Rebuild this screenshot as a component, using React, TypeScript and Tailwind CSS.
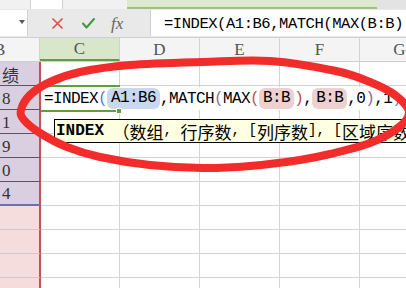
import React from "react";

// hand-drawn red loop, points traced from the screenshot
const LOOP: [number, number][] = [
  [21, 110], [30, 95], [50, 82], [80, 72], [130, 65], [203, 62], [270, 61],
  [336, 71], [370, 82], [395, 95], [409, 112], [398, 128], [370, 143],
  [330, 154], [300, 160], [250, 166], [203, 168], [150, 165], [100, 157],
  [67, 147], [40, 133], [24, 120],
];

function loopPath(pts: [number, number][]) {
  const n = pts.length;
  let d = `M${pts[0][0]},${pts[0][1]}`;
  for (let i = 0; i < n; i++) {
    const p0 = pts[(i - 1 + n) % n];
    const p1 = pts[i];
    const p2 = pts[(i + 1) % n];
    const p3 = pts[(i + 2) % n];
    const c1x = p1[0] + (p2[0] - p0[0]) / 6;
    const c1y = p1[1] + (p2[1] - p0[1]) / 6;
    const c2x = p2[0] - (p3[0] - p1[0]) / 6;
    const c2y = p2[1] - (p3[1] - p1[1]) / 6;
    d += ` C${c1x},${c1y} ${c2x},${c2y} ${p2[0]},${p2[1]}`;
  }
  return d;
}

const B_VALUES = ["绩", "8", "1", "9", "0", "4", "", "", "", ""];

function HeaderCell({
  label,
  className = "",
}: {
  label: string;
  className?: string;
}) {
  return (
    <div
      className={`h-full shrink-0 flex items-center justify-center border-r border-[#d2d2d2] font-['Liberation_Serif',serif] text-[17px] text-[#555] ${className}`}
    >
      {label}
    </div>
  );
}

function BodyRow({ index }: { index: number }) {
  const inRange = index < 6;
  const last = index === 5;
  const value = B_VALUES[index];
  return (
    <div className="flex h-[24px] shrink-0">
      <div
        className={`w-[41px] shrink-0 border-r-2 border-r-[#c9504f] flex items-center pl-[2px] pt-[2px] text-[#333] ${
          inRange ? "bg-[#dacfe0]" : "bg-[#f6dddd]"
        } ${
          last
            ? "border-b-2 border-b-[#6a70b8]"
            : inRange
              ? "border-b border-b-[#5c5366]"
              : "border-b border-b-[#d8c6c6]"
        } ${
          index === 0
            ? "font-['Noto_Sans_CJK_SC',sans-serif] text-[17px]"
            : "font-['Liberation_Serif',serif] text-[17px]"
        }`}
      >
        {value}
      </div>
      <div className="w-[79px] shrink-0 border-r border-b border-[#d4d4d4]" />
      <div className="w-[80px] shrink-0 border-r border-b border-[#d4d4d4]" />
      <div className="w-[80px] shrink-0 border-r border-b border-[#d4d4d4]" />
      <div className="w-[80px] shrink-0 border-r border-b border-[#d4d4d4]" />
      <div className="w-[80px] shrink-0 border-r border-b border-[#d4d4d4]" />
    </div>
  );
}

export default function App() {
  return (
    <div className="relative w-[406px] h-[288px] overflow-hidden bg-white flex flex-col">
      {/* top strip */}
      <div className="flex h-[9px] shrink-0">
        <div className="w-[31px] bg-[#f1f1f1] border-r border-[#d0d0d0]" />
        <div className="w-[32px] bg-white border-r border-[#d0d0d0]" />
        <div className="w-[64px] bg-[#f1f1f1]" />
        <div className="w-[250px] bg-[#dce8d0] border-b-2 border-[#9cc382]" />
        <div className="flex-1 bg-[#e3e3e3]" />
      </div>

      {/* formula bar */}
      <div className="flex items-start h-[29px] shrink-0 bg-[#e9e9e9] border-b border-[#cfcfcf] pt-[1px]">
        <div className="relative w-[28px] h-[26px] bg-white border-r border-[#d2d2d2]">
          <svg
            className="absolute left-[19px] top-[10px]"
            width="6"
            height="4"
            viewBox="0 0 6 4"
          >
            <path d="M0 0H6L3 4Z" fill="#555" />
          </svg>
        </div>
        <div className="w-[122px] h-[26px] flex items-center">
          <svg className="ml-[24px]" width="11" height="11" viewBox="0 0 11 11">
            <path
              d="M1 1L10 10M10 1L1 10"
              stroke="#e0504e"
              strokeWidth="1.7"
              strokeLinecap="round"
            />
          </svg>
          <svg className="ml-[19px]" width="13" height="11" viewBox="0 0 13 11">
            <path
              d="M1 5.5L4.5 9.5L12 1"
              fill="none"
              stroke="#3f9a3f"
              strokeWidth="2"
              strokeLinecap="round"
              strokeLinejoin="round"
            />
          </svg>
          <span className="ml-[16px] font-['Liberation_Serif',serif] italic text-[17px] text-[#666] leading-none">
            fx
          </span>
        </div>
        <div className="flex-1 h-[26px] bg-white border-l border-[#d0d0d0] flex items-center pl-[13px] pt-[3px]">
          <span className="block w-[238px] overflow-hidden font-['Liberation_Mono',monospace] text-[15.5px] tracking-[-0.45px] text-black whitespace-nowrap">
            =INDEX(A1:B6,MATCH(MAX(B:B),B:B,0),1)
          </span>
        </div>
      </div>

      {/* column headers */}
      <div className="flex h-[24px] shrink-0 bg-[#f4f4f4] border-b border-[#cfcfcf]">
        <HeaderCell label="B" className="w-[40px] justify-start pl-0 -indent-[6px]" />
        <HeaderCell
          label="C"
          className="w-[80px] bg-[#d8e6ca] text-[#4a9128] border-b-2 border-b-[#5f9f3f]"
        />
        <HeaderCell label="D" className="w-[80px]" />
        <HeaderCell label="E" className="w-[80px]" />
        <HeaderCell label="F" className="w-[80px]" />
        <HeaderCell label="G" className="w-[80px]" />
      </div>

      {/* cells */}
      {B_VALUES.map((_, i) => (
        <BodyRow key={i} index={i} />
      ))}

      {/* in-cell editor */}
      <div className="absolute left-[41px] top-[87px] right-0 h-[23px] bg-white flex items-center pl-[3px] font-['Liberation_Mono',monospace] text-[16px] tracking-[-0.6px] text-black whitespace-nowrap">
        <span>=INDEX</span>
        <span className="text-[#5a7fc6]">(</span>
        <span className="rounded-[6px] bg-[#c8d8ef] px-[4px] leading-[21px]">A1:B6</span>
        <span>,MATCH</span>
        <span className="text-[#8f6a9c]">(</span>
        <span>MAX</span>
        <span className="text-[#c0504d]">(</span>
        <span className="rounded-[6px] bg-[#efd0d0] px-[4px] leading-[21px]">B:B</span>
        <span className="text-[#c0504d]">)</span>
        <span>,</span>
        <span className="rounded-[6px] bg-[#efd0d0] px-[4px] leading-[21px]">B:B</span>
        <span>,0</span>
        <span className="text-[#8f6a9c]">)</span>
        <span>,1</span>
        <span className="text-[#5a7fc6]">)</span>
      </div>
      <div className="absolute left-[41px] top-[85px] w-[79px] h-[27px] border-y-2 border-[#5f9f3f]" />
      <div className="absolute left-[116px] top-[108px] w-[6px] h-[6px] bg-[#5f9f3f] border border-white" />

      {/* function tooltip */}
      <div className="absolute left-[54px] top-[119px] -right-[40px] h-[24px] bg-[#ffffe1] border border-black flex items-center pl-[1px] whitespace-pre text-black">
        <span className="font-['Liberation_Mono',monospace] font-bold text-[16px]">INDEX</span>
        <span className="font-['Liberation_Mono',monospace] text-[14.17px]"> </span>
        <span className="font-['Noto_Sans_CJK_SC',sans-serif] text-[17px] leading-none">（数组</span>
        <span className="font-['Liberation_Mono',monospace] text-[14.17px]">, </span>
        <span className="font-['Noto_Sans_CJK_SC',sans-serif] text-[17px] leading-none">行序数</span>
        <span className="font-['Liberation_Mono',monospace] text-[14.17px]">, [</span>
        <span className="font-['Noto_Sans_CJK_SC',sans-serif] text-[17px] leading-none">列序数</span>
        <span className="font-['Liberation_Mono',monospace] text-[14.17px]">], [</span>
        <span className="font-['Noto_Sans_CJK_SC',sans-serif] text-[17px] leading-none">区域序数</span>
        <span className="font-['Liberation_Mono',monospace] text-[14.17px]">])</span>
      </div>

      {/* red annotation loop */}
      <svg
        className="absolute inset-0 pointer-events-none"
        width="406"
        height="288"
        viewBox="0 0 406 288"
      >
        <path
          d={loopPath(LOOP)}
          fill="none"
          stroke="#f22b2b"
          strokeWidth="8"
          strokeLinejoin="round"
          strokeLinecap="round"
        />
      </svg>
    </div>
  );
}
